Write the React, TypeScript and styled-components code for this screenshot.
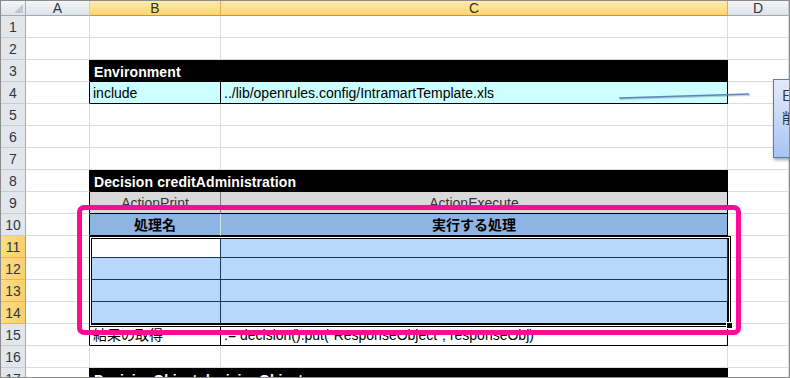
import React from 'react'
import styled, { createGlobalStyle, css } from 'styled-components'

const GlobalStyle = createGlobalStyle`
  html, body {
    margin: 0;
    padding: 0;
    background: #fff;
  }
  body {
    font-family: 'Liberation Sans', 'Noto Sans CJK JP', sans-serif;
  }
`

const GRID = '#dadcdd'
const NAVY = '#17375e'

const Frame = styled.div`
  position: relative;
  width: 790px;
  height: 378px;
  box-sizing: border-box;
  border: 1px solid #8c8c8c;
  overflow: hidden;
  background: #fff;
`

const Sheet = styled.div`
  display: grid;
  grid-template-columns: 25px 64px 131px 507px 61px;
  grid-template-rows: 15px;
  grid-auto-rows: 22px;
`

const Corner = styled.div`
  position: relative;
  box-sizing: border-box;
  background: linear-gradient(#f4f5f7, #dfe3e8);
  border-right: 1px solid #9eabbb;
  border-bottom: 1px solid #9eabbb;
  &::after {
    content: '';
    position: absolute;
    right: 2px;
    bottom: 2px;
    border-left: 9px solid transparent;
    border-bottom: 9px solid #c3c8cf;
  }
`

const ColHeader = styled.div<{ $selected?: boolean }>`
  box-sizing: border-box;
  display: flex;
  align-items: center;
  justify-content: center;
  font-size: 14px;
  color: #2b3648;
  background: linear-gradient(#f4f5f7, #dfe3e8);
  border-right: 1px solid #c5ccd6;
  border-bottom: 1px solid #9eabbb;
  ${p =>
    p.$selected &&
    css`
      background: linear-gradient(#fdebb0, #f9d56f);
      border-right-color: #e7a94b;
      border-bottom-color: #e18f2c;
      color: #3a2e10;
    `}
`

const RowHeader = styled.div<{ $selected?: boolean }>`
  box-sizing: border-box;
  display: flex;
  align-items: center;
  justify-content: center;
  padding-top: 1px;
  font-size: 14px;
  color: #2b3648;
  background: #e3e6eb;
  border-right: 1px solid #9eabbb;
  border-bottom: 1px solid #c5ccd6;
  ${p =>
    p.$selected &&
    css`
      background: linear-gradient(90deg, #fcdc84, #f9d06a);
      border-right-color: #e18f2c;
      border-bottom-color: #e7b25a;
    `}
`

const Cell = styled.div<{
  $fill?: string
  $right?: string
  $bottom?: string
  $center?: boolean
  $bold?: boolean
  $color?: string
}>`
  box-sizing: border-box;
  display: flex;
  align-items: flex-end;
  justify-content: ${p => (p.$center ? 'center' : 'flex-start')};
  padding: 0 3px 2px 3px;
  white-space: nowrap;
  overflow: hidden;
  font-size: 14px;
  font-weight: ${p => (p.$bold ? 700 : 400)};
  color: ${p => p.$color || '#000'};
  background: ${p => p.$fill || '#fff'};
  border-right: 1px solid ${p => p.$right || GRID};
  border-bottom: 1px solid ${p => p.$bottom || GRID};
`

const TitleBar = styled.div`
  grid-column: span 2;
  box-sizing: border-box;
  display: flex;
  align-items: center;
  padding: 1px 4px 0 4px;
  background: #000;
  color: #fff;
  font-size: 14px;
  font-weight: 700;
  letter-spacing: 0.1px;
  white-space: nowrap;
  border-right: 1px solid #000;
`

const Jp = styled.span<{ $underline?: boolean }>`
  font-family: 'Noto Sans CJK JP', sans-serif;
  font-size: 14px;
  line-height: 17px;
  ${p =>
    p.$underline &&
    css`
      position: relative;
      &::after {
        content: '';
        position: absolute;
        left: -13px;
        right: -12px;
        bottom: -3px;
        border-bottom: 1px solid #1f3247;
      }
    `}
`

const Highlight = styled.div`
  position: absolute;
  left: 76px;
  top: 204px;
  width: 664px;
  height: 130px;
  box-sizing: border-box;
  border: 5px solid #ff0a96;
  border-radius: 7px;
`

const Selection = styled.div`
  position: absolute;
  left: 88px;
  top: 235px;
  width: 642px;
  height: 91px;
  box-sizing: border-box;
  border: 1px solid #000;
  box-shadow: inset 0 0 0 1px #fff, inset 0 0 0 2px #000;
`

const FillHandle = styled.div`
  position: absolute;
  left: 725px;
  top: 321px;
  width: 5px;
  height: 5px;
  background: #000;
  border: 1px solid #fff;
`

const Callout = styled.div`
  position: absolute;
  left: 772px;
  top: 78px;
  width: 120px;
  height: 79px;
  box-sizing: border-box;
  padding: 4px 0 0 8px;
  background: linear-gradient(#e3ebfb, #a7c4f3);
  border: 1px solid #4f7fbd;
  box-shadow: 1px 2px 3px rgba(0, 0, 0, 0.35);
  font-family: 'Noto Sans CJK JP', sans-serif;
  font-size: 14px;
  line-height: 22px;
  color: #333;
  white-space: nowrap;
`

const Connector = styled.svg`
  position: absolute;
  left: 610px;
  top: 86px;
`

type RowSpec = {
  n: number
  title?: string
  b?: React.ReactNode
  c?: React.ReactNode
  fill?: string
  bFill?: string
  border?: string
  divider?: string
  center?: boolean
  bold?: boolean
  color?: string
  selected?: boolean
}

const blue = '#b8d8fb'

const rows: RowSpec[] = [
  { n: 1 },
  { n: 2 },
  { n: 3, title: 'Environment' },
  { n: 4, fill: '#ccffff', b: 'include', c: '../lib/openrules.config/IntramartTemplate.xls', border: '#000', divider: '#000' },
  { n: 5 },
  { n: 6 },
  { n: 7 },
  { n: 8, title: 'Decision creditAdministration' },
  { n: 9, fill: '#d9d9d9', b: 'ActionPrint', c: 'ActionExecute', border: '#000', divider: '#808080', center: true, color: '#333' },
  {
    n: 10,
    fill: '#8db4e2',
    b: <Jp $underline>処理名</Jp>,
    c: <Jp>実行する処理</Jp>,
    border: '#000',
    divider: '#d6e2f0',
    center: true,
    bold: true,
  },
  { n: 11, fill: blue, bFill: '#fff', border: NAVY, divider: NAVY, selected: true },
  { n: 12, fill: blue, border: NAVY, divider: NAVY, selected: true },
  { n: 13, fill: blue, border: NAVY, divider: NAVY, selected: true },
  { n: 14, fill: blue, border: '#000', divider: NAVY, selected: true },
  {
    n: 15,
    b: <Jp>結果の取得</Jp>,
    c: ':= decision().put("ResponseObject", responseObj)',
    border: '#000',
    divider: '#000',
  },
  { n: 16 },
  { n: 17, title: 'DecisionObject decisionObjects' },
]

const SheetRow: React.FC<{ row: RowSpec }> = ({ row }) => {
  const inTable = !!(row.title || row.border)
  return (
    <>
      <RowHeader $selected={row.selected}>{row.n}</RowHeader>
      <Cell $right={inTable ? '#000' : undefined} />
      {row.title ? (
        <TitleBar>{row.title}</TitleBar>
      ) : (
        <>
          <Cell
            $fill={row.bFill || row.fill}
            $right={row.divider}
            $bottom={row.border}
            $center={row.center}
            $bold={row.bold}
            $color={row.color}
          >
            {row.b}
          </Cell>
          <Cell
            $fill={row.fill}
            $right={row.border}
            $bottom={row.border}
            $center={row.center}
            $bold={row.bold}
            $color={row.color}
          >
            {row.c}
          </Cell>
        </>
      )}
      <Cell />
    </>
  )
}

export default function App() {
  return (
    <>
      <GlobalStyle />
      <Frame>
        <Sheet>
          <Corner />
          <ColHeader>A</ColHeader>
          <ColHeader $selected>B</ColHeader>
          <ColHeader $selected>C</ColHeader>
          <ColHeader>D</ColHeader>
          {rows.map(r => (
            <SheetRow key={r.n} row={r} />
          ))}
        </Sheet>
        <Selection />
        <FillHandle />
        <Highlight />
        <Connector width="150" height="16" viewBox="0 0 150 16">
          <line x1="9" y1="12" x2="139" y2="8" stroke="rgba(0,0,0,0.18)" strokeWidth="2" />
          <line x1="8" y1="11" x2="138" y2="7" stroke="#5b86c0" strokeWidth="1.3" />
        </Connector>
        <Callout>
          <div>Environment</div>
          <div>削除しないでください</div>
        </Callout>
      </Frame>
    </>
  )
}
